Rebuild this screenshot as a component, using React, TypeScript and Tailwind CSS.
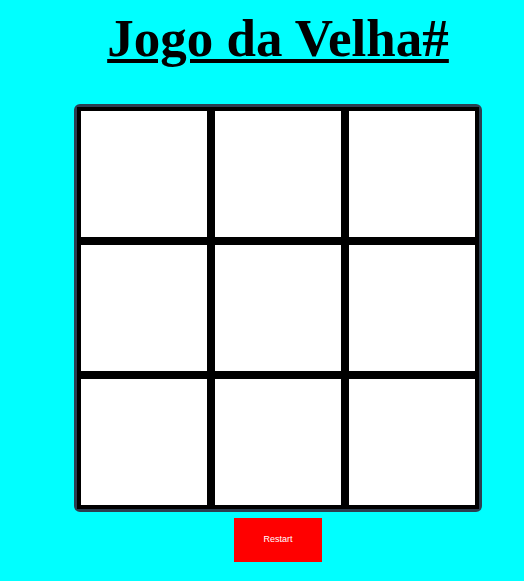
const cells = Array.from({ length: 9 }, (_, i) => i);

export default function App() {
  return (
    <main className="min-h-[581px] w-full bg-[#00ffff] pl-[32px] flex flex-col items-center overflow-hidden">
      <h1 className="mt-[12px] font-['Liberation_Serif',serif] text-[53px] leading-none font-bold underline decoration-[4px] underline-offset-[3px] text-black">
        Jogo da Velha#
      </h1>

      {/* TABULEIRO */}
      <div className="mt-[39px] border-[3px] border-[#2c3e50] rounded-[6px] grid grid-cols-[repeat(3,134px)] grid-rows-[repeat(3,134px)] bg-black">
        {cells.map((cell) => (
          <button
            key={cell}
            className="border-[4px] border-black bg-white"
          />
        ))}
      </div>

      <button className="mt-[6px] w-[88px] h-[44px] bg-[#ff0000] text-white text-[9px] font-['Liberation_Sans',sans-serif]">
        Restart
      </button>
    </main>
  );
}
